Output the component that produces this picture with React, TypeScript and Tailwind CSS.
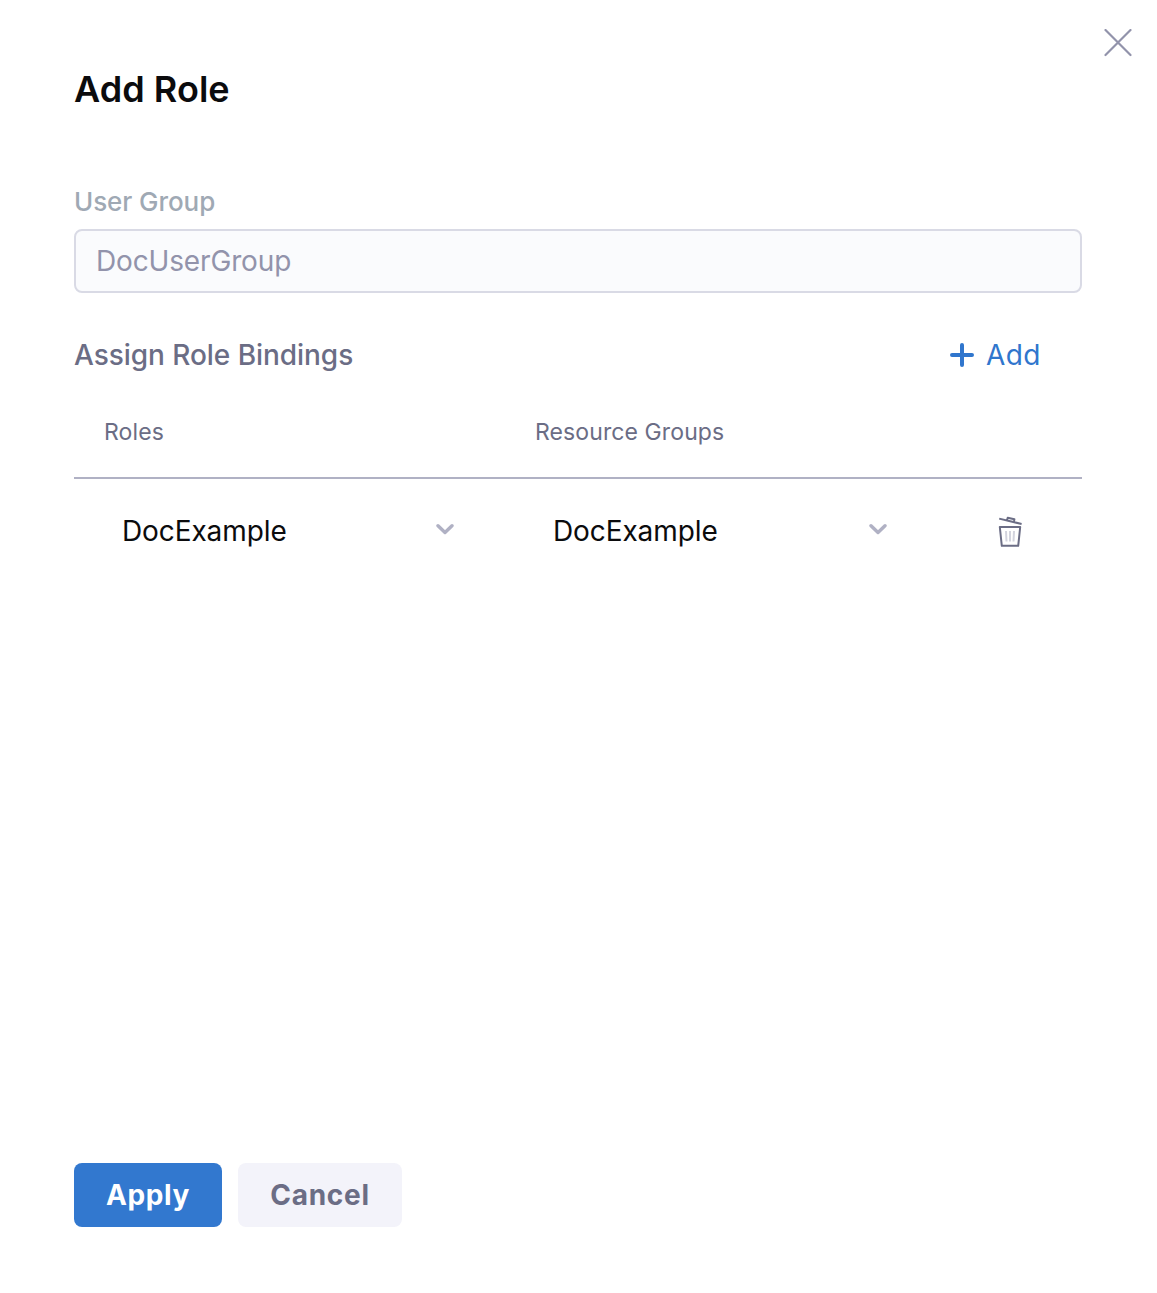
import React from "react";

function Chevron() {
  return (
    <svg className="-mt-[5px] block h-[12px] w-[18px]" viewBox="0 0 18 12" fill="none" stroke="#b0b1c4" strokeWidth="3.4" strokeLinecap="round" strokeLinejoin="round">
      <path d="M2 2.7 9 9.5 16 2.7" />
    </svg>
  );
}

function TrashIcon() {
  return (
    <svg className="block h-[33px] w-[26px]" viewBox="0 0 26 33" fill="none" stroke="#6b6d85" strokeWidth="2">
      <path d="M2.8 12H23.2L21.2 30.8H4.8z" strokeLinejoin="round" />
      <path d="M2.2 3.6 24.6 9M10 5.2 10.7 2.8 17.4 4.3 16.9 6.8" strokeLinejoin="round" />
      <path d="M9 16 9.5 26.5M13 16V26.5M17 16 16.5 26.5" stroke="#d3d4de" />
    </svg>
  );
}

export default function App() {
  return (
    <div className="flex h-[1293px] w-[1157px] flex-col bg-white pr-[75px] pl-[74px] font-['Inter',sans-serif] text-[#0b0b0d]">
      <header className="relative flex h-[180px] flex-col pt-[65px]">
        <h1 className="text-[36px] leading-[48px] font-semibold tracking-[0.05px]">Add Role</h1>
        <button aria-label="Close" className="absolute top-[29px] -right-[50px]">
          <svg className="block h-[28px] w-[28px]" viewBox="0 0 28 28" fill="none" stroke="#9293ab" strokeWidth="2.2" strokeLinecap="round">
            <path d="M1.5 1 26.5 26M26.5 1 1.5 26" />
          </svg>
        </button>
      </header>
      <label className="flex h-[49px] items-center pb-[6px] text-[26px] font-medium tracking-[-0.08px] text-[#9fa9b4]">User Group</label>
      <div className="flex h-[64px] items-center rounded-[8px] border-2 border-[#d9dae5] bg-[#fafbfd] px-[20px] text-[28px] tracking-[-0.15px] text-[#9293ab]">DocUserGroup</div>
      <div className="mt-[38px] flex h-[48px] items-center justify-between pr-[41px]">
        <h2 className="text-[28px] font-medium tracking-[-0.05px] text-[#6b6d85]">Assign Role Bindings</h2>
        <button className="flex items-center gap-[12px] text-[28px] tracking-[0.5px] text-[#3076cd]">
          <svg className="h-[24px] w-[24px]" viewBox="0 0 24 24" stroke="currentColor" strokeWidth="4" strokeLinecap="round">
            <path d="M12 2V22M2 12H22" />
          </svg>
          Add
        </button>
      </div>
      <div className="mt-[29px] flex h-[71px] border-b-2 border-[#b0b1c4] pl-[30px] text-[23px] leading-[48px] tracking-[0.1px] text-[#6b6d85]">
        <span className="w-[431px]">Roles</span>
        <span>Resource Groups</span>
      </div>
      <div className="flex h-[105px] items-center pl-[48px] text-[28px] tracking-[-0.1px]">
        <div className="flex w-[431px] items-center pr-[99px]"><span className="flex-1 pb-[2px]">DocExample</span><Chevron /></div>
        <div className="flex w-[334px] items-center"><span className="flex-1 pb-[2px]">DocExample</span><Chevron /></div>
        <button aria-label="Delete" className="-mt-px ml-[110px]"><TrashIcon /></button>
      </div>
      <footer className="mt-auto mb-[66px] flex h-[64px] gap-[16px] text-[28px] font-bold">
        <button className="w-[148px] rounded-[8px] bg-[#3278cf] tracking-[0.6px] text-white">Apply</button>
        <button className="w-[164px] rounded-[8px] bg-[#f3f3fa] tracking-[0.75px] text-[#6b6d85]">Cancel</button>
      </footer>
    </div>
  );
}
